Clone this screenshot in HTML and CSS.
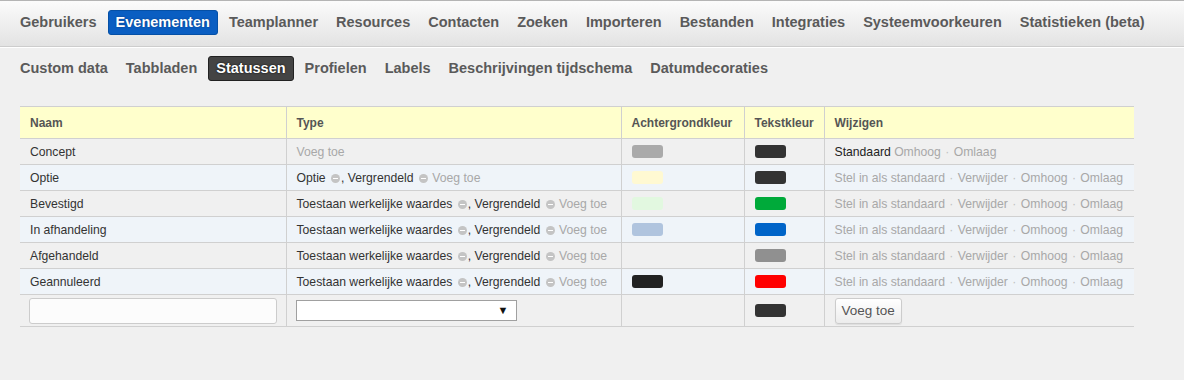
FILE: index.html
```html
<!DOCTYPE html>
<html lang="nl">
<head>
    <meta charset="UTF-8">
    <meta name="viewport" content="width=device-width, initial-scale=1.0">
    <title>Statussen</title>
    <link rel="stylesheet" href="styles.css">
</head>
<body>
<div class="topnav">
    <a href="#">Gebruikers</a>
    <a href="#" class="active">Evenementen</a>
    <a href="#">Teamplanner</a>
    <a href="#">Resources</a>
    <a href="#">Contacten</a>
    <a href="#">Zoeken</a>
    <a href="#">Importeren</a>
    <a href="#">Bestanden</a>
    <a href="#">Integraties</a>
    <a href="#">Systeemvoorkeuren</a>
    <a href="#">Statistieken (beta)</a>
</div>
<div class="subnav">
    <a href="#">Custom data</a>
    <a href="#">Tabbladen</a>
    <a href="#" class="active">Statussen</a>
    <a href="#">Profielen</a>
    <a href="#">Labels</a>
    <a href="#">Beschrijvingen tijdschema</a>
    <a href="#">Datumdecoraties</a>
</div>
<div class="content">
    <table class="status-table">
        <colgroup>
            <col style="width:266px">
            <col style="width:335px">
            <col style="width:123px">
            <col style="width:80px">
            <col>
        </colgroup>
        <thead>
        <tr>
            <th>Naam</th>
            <th>Type</th>
            <th>Achtergrondkleur</th>
            <th>Tekstkleur</th>
            <th>Wijzigen</th>
        </tr>
        </thead>
        <tbody>
        <tr>
            <td>Concept</td>
            <td><a href="#" class="muted">Voeg toe</a></td>
            <td><span class="swatch" style="background:#aaaaaa"></span></td>
            <td><span class="swatch" style="background:#333333"></span></td>
            <td><span class="default">Standaard</span> <a href="#" class="muted">Omhoog</a> <span class="sep">·</span> <a href="#" class="muted">Omlaag</a></td>
        </tr>
        <tr>
            <td>Optie</td>
            <td>Optie <span class="remove"></span>, Vergrendeld <span class="remove"></span> <a href="#" class="muted">Voeg toe</a></td>
            <td><span class="swatch" style="background:#fff9d2"></span></td>
            <td><span class="swatch" style="background:#333333"></span></td>
            <td class="actions"><a href="#">Stel in als standaard</a> <span class="sep">·</span> <a href="#">Verwijder</a> <span class="sep">·</span> <a href="#">Omhoog</a> <span class="sep">·</span> <a href="#">Omlaag</a></td>
        </tr>
        <tr>
            <td>Bevestigd</td>
            <td>Toestaan werkelijke waardes <span class="remove"></span>, Vergrendeld <span class="remove"></span> <a href="#" class="muted">Voeg toe</a></td>
            <td><span class="swatch" style="background:#e2f8e0"></span></td>
            <td><span class="swatch" style="background:#00aa3a"></span></td>
            <td class="actions"><a href="#">Stel in als standaard</a> <span class="sep">·</span> <a href="#">Verwijder</a> <span class="sep">·</span> <a href="#">Omhoog</a> <span class="sep">·</span> <a href="#">Omlaag</a></td>
        </tr>
        <tr>
            <td>In afhandeling</td>
            <td>Toestaan werkelijke waardes <span class="remove"></span>, Vergrendeld <span class="remove"></span> <a href="#" class="muted">Voeg toe</a></td>
            <td><span class="swatch" style="background:#b0c4de"></span></td>
            <td><span class="swatch" style="background:#0064c8"></span></td>
            <td class="actions"><a href="#">Stel in als standaard</a> <span class="sep">·</span> <a href="#">Verwijder</a> <span class="sep">·</span> <a href="#">Omhoog</a> <span class="sep">·</span> <a href="#">Omlaag</a></td>
        </tr>
        <tr>
            <td>Afgehandeld</td>
            <td>Toestaan werkelijke waardes <span class="remove"></span>, Vergrendeld <span class="remove"></span> <a href="#" class="muted">Voeg toe</a></td>
            <td></td>
            <td><span class="swatch" style="background:#909090"></span></td>
            <td class="actions"><a href="#">Stel in als standaard</a> <span class="sep">·</span> <a href="#">Verwijder</a> <span class="sep">·</span> <a href="#">Omhoog</a> <span class="sep">·</span> <a href="#">Omlaag</a></td>
        </tr>
        <tr>
            <td>Geannuleerd</td>
            <td>Toestaan werkelijke waardes <span class="remove"></span>, Vergrendeld <span class="remove"></span> <a href="#" class="muted">Voeg toe</a></td>
            <td><span class="swatch" style="background:#222222"></span></td>
            <td><span class="swatch" style="background:#ff0000"></span></td>
            <td class="actions"><a href="#">Stel in als standaard</a> <span class="sep">·</span> <a href="#">Verwijder</a> <span class="sep">·</span> <a href="#">Omhoog</a> <span class="sep">·</span> <a href="#">Omlaag</a></td>
        </tr>
        <tr class="new-row">
            <td><input type="text" class="name-input"></td>
            <td><div class="select-wrap"><select class="type-select"><option></option></select></div></td>
            <td></td>
            <td><span class="swatch" style="background:#333333"></span></td>
            <td><button class="add-button">Voeg toe</button></td>
        </tr>
        </tbody>
    </table>
</div>
</body>
</html>
```

FILE: styles.css
```css
body {
    font-family: "Liberation Sans", Arial, sans-serif;
    background-color: #f0f0f0;
    margin: 0;
    padding: 0;
    color: #333;
}
.topnav {
    display: flex;
    align-items: flex-start;
    gap: 4px;
    height: 36px;
    padding: 9px 13px 0;
    background: linear-gradient(#fbfbfb, #e3e3e3);
    border-top: 1px solid #b4b4b4;
    border-bottom: 1px solid #cdcdcd;
    box-shadow: 0 1px 0 #fff;
}
.subnav {
    display: flex;
    gap: 4px;
    padding: 9px 13px 0;
}
.topnav a,
.subnav a {
    display: block;
    padding: 3px 6px;
    line-height: 17px;
    font-size: 14.5px;
    font-weight: bold;
    color: #5a5a5a;
    text-decoration: none;
    white-space: nowrap;
    border: 1px solid transparent;
    border-radius: 3px;
}
.topnav a.active {
    padding: 3px 7px;
    background-color: #0a5ec2;
    border-color: #0550a6;
    color: #fff;
    text-shadow: 0 0 2px #0a3b80;
}
.subnav a.active {
    padding: 3px 7px;
    background-color: #444;
    border-color: #222;
    color: #fff;
    text-shadow: 0 0 2px #000;
}
.content {
    padding: 25px 20px 0;
}
.status-table {
    width: 1114px;
    border-collapse: collapse;
    table-layout: fixed;
    font-size: 12.2px;
}
.status-table th,
.status-table td {
    border-top: 1px solid #d0d0d0;
    border-bottom: 1px solid #d0d0d0;
    border-left: 1px solid #d0d0d0;
    padding: 0 10px;
    text-align: left;
    white-space: nowrap;
}
.status-table th:first-child,
.status-table td:first-child {
    border-left: none;
}
.status-table th {
    background-color: #ffffcc;
    color: #555;
    height: 31px;
    font-size: 12px;
    font-weight: bold;
}
.status-table td {
    height: 25px;
}
.status-table tbody tr:nth-child(even) td {
    background-color: #eff4f9;
}
.status-table .new-row td {
    height: 31px;
}
.swatch {
    display: block;
    width: 31px;
    height: 13px;
    border-radius: 3px;
}
.muted,
.actions a {
    color: #a8a8a8;
    text-decoration: none;
}
.sep {
    color: #c0c0c0;
    padding: 0 1px;
}
.default {
    color: #222;
}
.remove {
    display: inline-block;
    position: relative;
    width: 9px;
    height: 9px;
    margin: 0 1px 0 2px;
    border-radius: 50%;
    background-color: #c4c4c4;
    vertical-align: -1px;
}
.remove::after {
    content: "";
    position: absolute;
    left: 2px;
    top: 4px;
    width: 5px;
    height: 1px;
    background-color: #fff;
}
.name-input {
    display: block;
    box-sizing: border-box;
    width: 248px;
    height: 26px;
    margin-left: -1px;
    border: 1px solid #ccc;
    border-radius: 3px;
    background-color: #fcfcfc;
}
.select-wrap {
    position: relative;
    width: 221px;
    margin-left: -1px;
}
.select-wrap::after {
    content: "▼";
    position: absolute;
    right: 8px;
    top: 4px;
    font-size: 11px;
    color: #111;
    pointer-events: none;
}
.type-select {
    display: block;
    width: 221px;
    height: 21px;
    appearance: none;
    border: 1px solid #a0a0a0;
    border-radius: 0;
    background-color: #fff;
}
.add-button {
    height: 26px;
    padding: 0 6px;
    font-family: "Liberation Sans", Arial, sans-serif;
    font-size: 13.5px;
    color: #555;
    background: linear-gradient(#fff, #ececec);
    border: 1px solid #ccc;
    border-radius: 3px;
    box-shadow: 0 1px 1px rgba(0, 0, 0, 0.08);
    cursor: pointer;
}
```
